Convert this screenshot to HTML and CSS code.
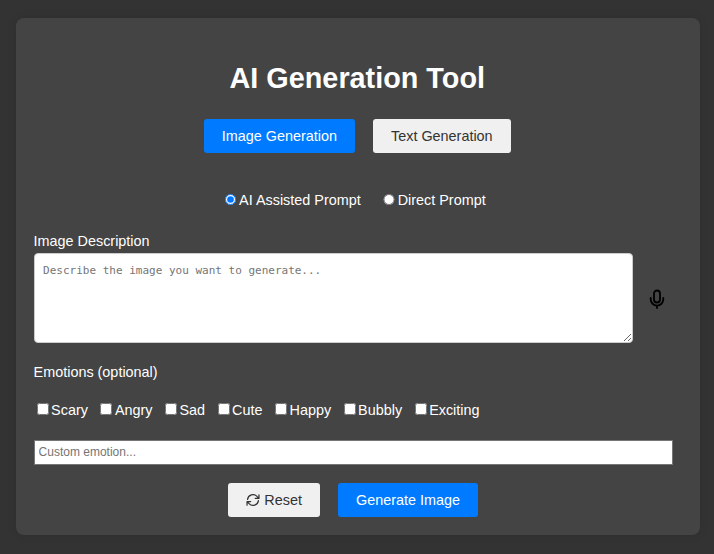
FILE: index.html
```html
<!DOCTYPE html>
<html lang="en">
<head>
<meta charset="utf-8">
<title>AI Generation Tool</title>
<link rel="stylesheet" href="styles.css">
</head>
<body>
<main class="container">
  <h1>AI Generation Tool</h1>
  <div class="tabs">
    <button class="btn primary tab-image">Image Generation</button>
    <button class="btn tab-text">Text Generation</button>
  </div>
  <div class="modes">
    <label><input type="radio" name="mode" checked>AI Assisted Prompt</label>
    <label><input type="radio" name="mode">Direct Prompt</label>
  </div>
  <label class="field-label" for="desc">Image Description</label>
  <div class="describe">
    <textarea id="desc" placeholder="Describe the image you want to generate..."></textarea>
    <svg class="mic" viewBox="0 0 20 20" fill="none" stroke="#000" stroke-width="1.8" stroke-linecap="round"><rect x="7" y="1.500" width="6" height="12" rx="3"/><path d="M3.700 9v1.300a6.300 6.300 0 0 0 12.600 0V9M10 16.700V19"/></svg>
  </div>
  <div class="field-label emotions-label">Emotions (optional)</div>
  <div class="emotions">
    <label><input type="checkbox">Scary</label>
    <label><input type="checkbox">Angry</label>
    <label><input type="checkbox">Sad</label>
    <label><input type="checkbox">Cute</label>
    <label><input type="checkbox">Happy</label>
    <label><input type="checkbox">Bubbly</label>
    <label><input type="checkbox">Exciting</label>
  </div>
  <input class="custom" type="text" placeholder="Custom emotion...">
  <div class="actions">
    <button class="btn reset"><svg class="refresh" viewBox="0 0 16 16" fill="none" stroke="#333" stroke-width="1.4" stroke-linecap="round" stroke-linejoin="round"><path d="M1.800 7.300a6.200 6.200 0 0 1 10.700-3.400L14.600 6M14.800 2v4.200h-4.200M14.200 8.700a6.200 6.200 0 0 1-10.700 3.400L1.400 10M1.200 14V9.800h4.200"/></svg>Reset</button>
    <button class="btn primary generate">Generate Image</button>
  </div>
</main>
</body>
</html>
```
FILE: styles.css
```css
* { box-sizing: border-box; }
body {
  margin: 0;
  padding: 18px 14px 0 16px;
  height: 554px;
  overflow: hidden;
  background: #333;
  color: #fff;
  font: 14.4px/17px "Liberation Sans", Arial, sans-serif;
}
.container {
  height: 517px;
  padding: 42px 19px 0 17.6px;
  border-radius: 8px;
  background: #444;
  box-shadow: 0 0 10px rgba(0, 0, 0, .1);
}
h1 { margin: 0; font-size: 28.8px; line-height: 36px; text-align: center; }
.tabs, .actions { display: flex; justify-content: center; gap: 18px; }
.tabs { margin-top: 23px; }
.btn {
  height: 34px;
  padding: 0;
  border: 0;
  border-radius: 3px;
  background: #f0f0f0;
  color: #333;
  font: inherit;
}
.primary { background: #007bff; color: #fff; }
.tab-image { width: 151px; }
.tab-text { width: 138px; }
.modes { display: flex; gap: 19.5px; margin: 39px 0 0 188px; height: 17px; }
label { display: flex; align-items: center; }
.modes input { margin: -2px 3px 0; width: 11.5px; height: 11.5px; }
.field-label { display: block; margin-top: 24px; }
.describe { display: flex; align-items: center; margin-top: 3px; }
textarea {
  width: 599px;
  height: 90px;
  padding: 9px 8.5px;
  border: 1px solid #ccc;
  border-radius: 4px;
  font: 11px/15px "DejaVu Sans Mono", monospace;
}
.mic { width: 20px; height: 20px; margin: 1px 0 0 14px; }
.emotions-label { margin-top: 21px; }
.emotions { display: flex; gap: 9.5px; margin-top: 21px; }
.emotions input { width: 12px; height: 12px; margin: -3px 2.5px 0 3px; }
.custom {
  display: block;
  width: 639px;
  height: 25px;
  margin-top: 21px;
  padding: 0 4px 2px;
  border: 1px solid #767676;
  font: 12px "Liberation Sans", Arial, sans-serif;
}
.actions { width: 639px; margin-top: 18px; }
.reset { display: flex; align-items: center; justify-content: center; gap: 4px; width: 92px; }
.generate { width: 140px; }
.refresh { width: 14px; height: 14px; }
```
